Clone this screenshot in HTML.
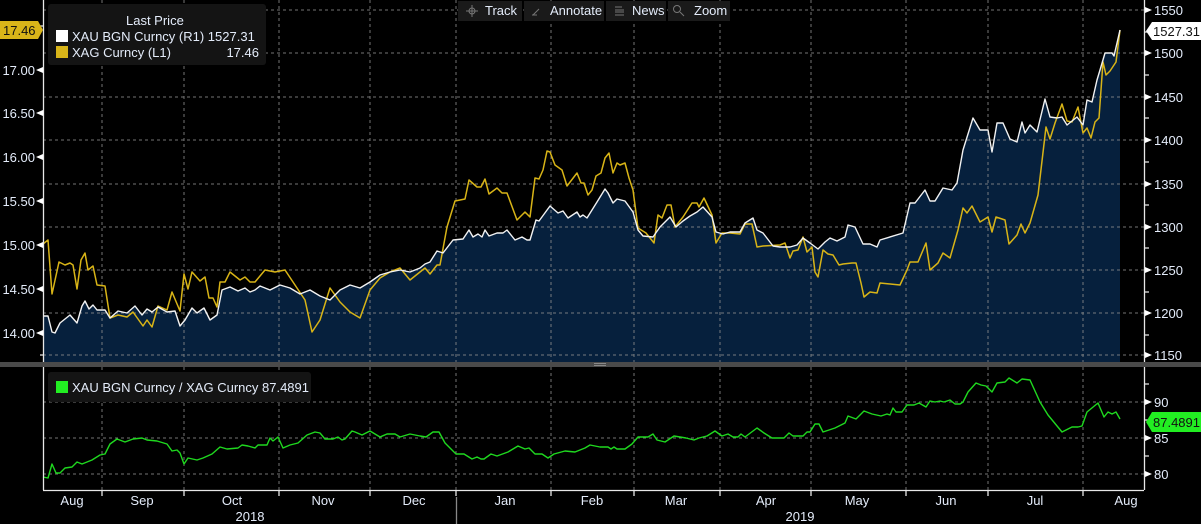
<!DOCTYPE html>
<html><head><meta charset="utf-8"><style>
html,body{margin:0;padding:0;background:#000;width:1201px;height:524px;overflow:hidden;font-family:"Liberation Sans",sans-serif}
svg{display:block}
text{font-family:"Liberation Sans",sans-serif;font-size:13px;fill:#e4ecfa}
</style></head><body>
<svg width="1201" height="524" viewBox="0 0 1201 524">
<rect width="1201" height="524" fill="#000"/>
<!-- fill under gold -->
<polygon fill="#06203d" points="43,362 43,316 48,316 52,332 55,333 60,323 70,315 77,323 82,306 85,301 89,309 93,305 97,310 105,310 110,318 118,311 127,313 135,306 142,315 147,309 152,312 158,307 167,312 175,311 180,326 185,320 192,308 197,313 204,308 210,320 217,315 222,290 230,287 238,291 245,288 250,292 255,290 260,286 270,290 280,285 290,288 300,294 310,290 320,296 330,300 340,290 350,285 360,288 370,282 380,275 390,272 400,270 410,272 420,268 425,264 430,262 437,251 443,253 453,240 463,239 469,230 473,237 478,234 482,237 485,230 489,236 497,233 503,233 507,230 515,240 522,237 527,240 530,240 536,220 539,221 550,206 558,213 563,211 568,218 577,212 580,217 583,215 587,218 597,202 605,189 608,193 613,203 617,199 625,201 633,212 638,230 643,236 653,237 660,227 670,217 676,227 683,221 690,216 697,212 703,207 712,217 716,232 723,234 730,232 740,232 745,223 753,218 757,230 763,233 773,246 780,247 790,247 797,245 803,238 810,243 818,249 825,242 830,238 837,241 845,237 848,225 855,227 863,244 870,244 877,247 880,240 903,233 910,203 915,203 925,190 930,201 935,201 943,188 952,190 957,183 963,150 973,118 980,130 988,130 992,152 997,123 1003,123 1010,139 1017,142 1022,122 1025,133 1030,125 1037,132 1045,99 1050,117 1057,118 1062,117 1067,125 1077,117 1083,125 1087,100 1092,102 1097,80 1100,70 1105,53 1112,53 1114,56 1120,30 1120,362"/>
<!-- grids -->
<g stroke="#8a8a8a" stroke-width="1" stroke-dasharray="3,3" fill="none" opacity="0.85">
<path d="M43 10H1144M43 53H1144M43 97H1144M43 140H1144M43 184H1144M43 227H1144M43 270H1144M43 313H1144M43 355H1144"/>
<path d="M43 402H1144M43 438H1144M43 474H1144"/>
<path d="M102 0V362M184 0V362M279 0V362M370 0V362M456 0V362M551 0V362M634 0V362M720 0V362M811 0V362M906 0V362M988 0V362M1083 0V362"/>
<path d="M102 367V490M184 367V490M279 367V490M370 367V490M456 367V490M551 367V490M634 367V490M720 367V490M811 367V490M906 367V490M988 367V490M1083 367V490"/>
</g>
<!-- silver -->
<polyline fill="none" stroke="#d8b417" stroke-width="1.5" stroke-linejoin="round" points="43,244 48,240 52,294 59,262 65,265 70,263 73,265 77,289 81,260 85,253 88,270 93,266 97,285 105,286 110,318 118,315 127,317 133,312 143,326 147,320 152,327 158,306 167,310 172,292 180,311 184,274 188,289 192,272 200,281 205,277 209,298 213,298 217,307 220,282 225,282 230,272 240,280 245,277 250,282 255,282 265,270 275,272 285,270 295,285 305,300 312,332 320,320 330,288 340,302 350,312 360,318 370,290 380,278 390,272 400,268 410,280 420,272 425,268 430,274 437,265 440,265 447,227 455,201 465,199 469,180 477,187 481,187 485,179 489,194 497,188 502,193 507,193 517,220 525,212 530,217 535,178 539,179 543,170 547,151 550,152 555,165 562,170 567,186 577,173 581,183 584,183 588,195 592,190 596,176 601,173 605,158 609,153 613,173 617,163 620,165 625,163 629,178 633,190 638,228 646,233 654,243 658,215 662,218 667,205 671,205 675,227 683,217 692,203 697,203 699,207 704,198 712,215 716,243 722,233 730,233 740,234 745,224 752,224 757,247 763,246 780,245 785,243 790,258 793,251 798,250 803,237 807,252 812,247 815,272 818,277 823,250 828,254 833,255 839,265 843,264 852,263 856,263 861,283 864,297 870,292 877,293 880,283 900,285 907,270 910,262 918,262 926,243 930,270 938,263 943,253 950,258 958,230 963,208 967,213 972,206 980,222 988,217 992,232 996,217 1005,220 1009,244 1017,235 1021,224 1025,233 1030,223 1038,195 1046,127 1050,139 1055,123 1062,104 1067,121 1072,122 1078,107 1083,133 1087,128 1091,138 1095,122 1099,118 1103,62 1106,75 1110,71 1116,62 1120,30"/>
<!-- gold line -->
<polyline fill="none" stroke="#f2f2f2" stroke-width="1.4" stroke-linejoin="round" points="43,316 48,316 52,332 55,333 60,323 70,315 77,323 82,306 85,301 89,309 93,305 97,310 105,310 110,318 118,311 127,313 135,306 142,315 147,309 152,312 158,307 167,312 175,311 180,326 185,320 192,308 197,313 204,308 210,320 217,315 222,290 230,287 238,291 245,288 250,292 255,290 260,286 270,290 280,285 290,288 300,294 310,290 320,296 330,300 340,290 350,285 360,288 370,282 380,275 390,272 400,270 410,272 420,268 425,264 430,262 437,251 443,253 453,240 463,239 469,230 473,237 478,234 482,237 485,230 489,236 497,233 503,233 507,230 515,240 522,237 527,240 530,240 536,220 539,221 550,206 558,213 563,211 568,218 577,212 580,217 583,215 587,218 597,202 605,189 608,193 613,203 617,199 625,201 633,212 638,230 643,236 653,237 660,227 670,217 676,227 683,221 690,216 697,212 703,207 712,217 716,232 723,234 730,232 740,232 745,223 753,218 757,230 763,233 773,246 780,247 790,247 797,245 803,238 810,243 818,249 825,242 830,238 837,241 845,237 848,225 855,227 863,244 870,244 877,247 880,240 903,233 910,203 915,203 925,190 930,201 935,201 943,188 952,190 957,183 963,150 973,118 980,130 988,130 992,152 997,123 1003,123 1010,139 1017,142 1022,122 1025,133 1030,125 1037,132 1045,99 1050,117 1057,118 1062,117 1067,125 1077,117 1083,125 1087,100 1092,102 1097,80 1100,70 1105,53 1112,53 1114,56 1120,30"/>
<!-- ratio -->
<polyline fill="none" stroke="#1fd81f" stroke-width="1.4" stroke-linejoin="round" points="43,477 48,478 52,464 56,473 60,473 65,468 72,467 77,462 82,464 92,460 100,455 105,454 110,444 117,439 125,442 133,439 142,438 147,440 157,441 167,444 172,451 177,450 180,453 184,464 188,458 197,460 203,458 212,454 220,447 227,449 238,448 242,445 248,446 255,448 258,445 267,445 270,438 273,441 278,437 283,448 290,445 298,443 307,435 315,432 320,433 325,439 333,439 338,437 342,440 345,439 352,431 355,432 362,435 370,431 380,437 387,434 395,434 400,437 410,434 420,436 426,437 433,432 439,432 445,443 456,454 464,454 472,459 477,457 481,459 484,459 491,454 497,456 508,452 518,446 525,449 529,448 535,454 542,454 548,458 554,454 565,451 575,452 585,448 590,445 600,447 608,447 611,449 614,447 617,449 625,449 632,444 638,437 648,437 653,434 657,440 665,442 674,436 686,438 694,440 699,438 707,436 715,431 722,436 728,434 733,437 738,437 741,434 745,437 757,428 764,433 772,438 784,438 789,433 793,436 803,436 807,432 810,432 815,424 819,424 823,432 835,428 845,423 848,416 856,419 864,411 872,414 881,416 887,414 890,415 893,408 896,412 902,412 907,405 914,405 919,403 926,407 930,401 935,402 940,401 944,402 950,400 955,404 960,404 963,402 968,392 976,383 981,385 986,386 992,392 997,383 1005,382 1009,378 1017,383 1022,379 1030,380 1040,402 1048,415 1062,432 1072,427 1078,427 1082,426 1087,412 1098,403 1104,417 1108,412 1112,414 1116,412 1120,419"/>
<!-- separator -->
<rect x="0" y="362" width="1201" height="5" fill="#4a4a4a"/>
<rect x="594" y="363" width="12" height="1" fill="#888"/><rect x="594" y="365" width="12" height="1" fill="#888"/>
<!-- axes -->
<g stroke="#e8e8e8" stroke-width="1.3" fill="none">
<path d="M43.5 0V362M43.5 367V490M1144.5 0V362M1144.5 367V490M43 490.5H1144"/>
<path d="M40 26H43M40 113H43M40 157H43M40 201H43M40 245H43M40 289H43M40 333H43M40 355H43"/>
<path d="M1145 32H1149M1145 75H1149M1145 118H1149M1145 162H1149M1145 205H1149M1145 248H1149M1145 292H1149M1145 335H1149M1145 384H1149M1145 420H1149M1145 456H1149"/>
<path d="M102 490V496M184 490V496M279 490V496M370 490V496M456 490V496M551 490V496M634 490V496M720 490V496M811 490V496M906 490V496M988 490V496M1083 490V496"/>
<path d="M456.5 497V524" stroke="#888"/>
</g>
<!-- left axis labels -->
<g fill="#fff">
<polygon points="36,70 43,67 43,73"/><polygon points="36,113 43,110 43,116"/><polygon points="36,157 43,154 43,160"/><polygon points="36,201 43,198 43,204"/><polygon points="36,245 43,242 43,248"/><polygon points="36,289 43,286 43,292"/><polygon points="36,333 43,330 43,336"/>
<polygon points="1152,10 1145,7 1145,13"/><polygon points="1152,53 1145,50 1145,56"/><polygon points="1152,97 1145,94 1145,100"/><polygon points="1152,140 1145,137 1145,143"/><polygon points="1152,184 1145,181 1145,187"/><polygon points="1152,227 1145,224 1145,230"/><polygon points="1152,270 1145,267 1145,273"/><polygon points="1152,313 1145,310 1145,316"/><polygon points="1152,355 1145,352 1145,358"/>
<polygon points="1152,402 1145,399 1145,405"/><polygon points="1152,438 1145,435 1145,441"/><polygon points="1152,474 1145,471 1145,477"/>
</g>
<g text-anchor="end">
<text x="35" y="75">17.00</text><text x="35" y="118">16.50</text><text x="35" y="162">16.00</text><text x="35" y="206">15.50</text><text x="35" y="250">15.00</text><text x="35" y="294">14.50</text><text x="35" y="338">14.00</text>
</g>
<g>
<text x="1154" y="15">1550</text><text x="1154" y="58">1500</text><text x="1154" y="102">1450</text><text x="1154" y="145">1400</text><text x="1154" y="189">1350</text><text x="1154" y="232">1300</text><text x="1154" y="275">1250</text><text x="1154" y="318">1200</text><text x="1154" y="360">1150</text>
<text x="1154" y="407">90</text><text x="1154" y="443">85</text><text x="1154" y="479">80</text>
</g>
<!-- tags -->
<polygon points="0,21 38,21 43,30 38,39 0,39" fill="#d9b519"/>
<text x="3" y="35" style="fill:#111">17.46</text>
<polygon points="1152,22 1201,22 1201,40 1152,40 1146,31" fill="#fff"/>
<text x="1153" y="36" style="fill:#111">1527.31</text>
<polygon points="1152,412 1201,412 1201,432 1152,432 1146,422" fill="#22ee22"/>
<text x="1153" y="427" style="fill:#111">87.4891</text>
<!-- months -->
<g text-anchor="middle">
<text x="72" y="505">Aug</text><text x="142" y="505">Sep</text><text x="232" y="505">Oct</text><text x="323" y="505">Nov</text><text x="414" y="505">Dec</text><text x="505" y="505">Jan</text><text x="592" y="505">Feb</text><text x="676" y="505">Mar</text><text x="766" y="505">Apr</text><text x="857" y="505">May</text><text x="946" y="505">Jun</text><text x="1035" y="505">Jul</text><text x="1126" y="505">Aug</text>
<text x="250" y="521">2018</text><text x="800" y="521">2019</text>
</g>
<!-- legend top -->
<rect x="48" y="4" width="218" height="61" rx="3" fill="#141414"/>
<text x="126" y="25">Last Price</text>
<rect x="56" y="30" width="12" height="12" fill="#fff"/>
<text x="72" y="41">XAU BGN Curncy  (R1) 1527.31</text>
<rect x="56" y="46" width="12" height="12" fill="#d9b519"/>
<text x="72" y="57">XAG Curncy  (L1)</text>
<text x="259" y="57" text-anchor="end">17.46</text>
<!-- legend bottom -->
<rect x="48" y="372" width="263" height="30" rx="3" fill="#141414"/>
<rect x="56" y="381" width="12" height="12" fill="#22ee22"/>
<text x="72" y="392">XAU BGN Curncy / XAG Curncy 87.4891</text>
<!-- toolbar -->
<g>
<rect x="458" y="1" width="64" height="20" fill="#1a1a1a"/>
<rect x="524" y="1" width="80" height="20" fill="#1a1a1a"/>
<rect x="606" y="1" width="60" height="20" fill="#1a1a1a"/>
<rect x="668" y="1" width="62" height="20" fill="#1a1a1a"/>
<g stroke="#777" fill="none" stroke-width="1">
<circle cx="472" cy="11" r="3"/><path d="M466 11H478M472 5V17"/>
<path d="M533 15L539 9M532 15H537"/>
<path d="M615 7H622M615 10H624M615 12H624M615 15H624"/>
<circle cx="677" cy="9" r="3.5"/><path d="M680 12L684 16"/>
</g>
<text x="485" y="15">Track</text><text x="550" y="15">Annotate</text><text x="632" y="15">News</text><text x="694" y="15">Zoom</text>
</g>
</svg>
</body></html>
